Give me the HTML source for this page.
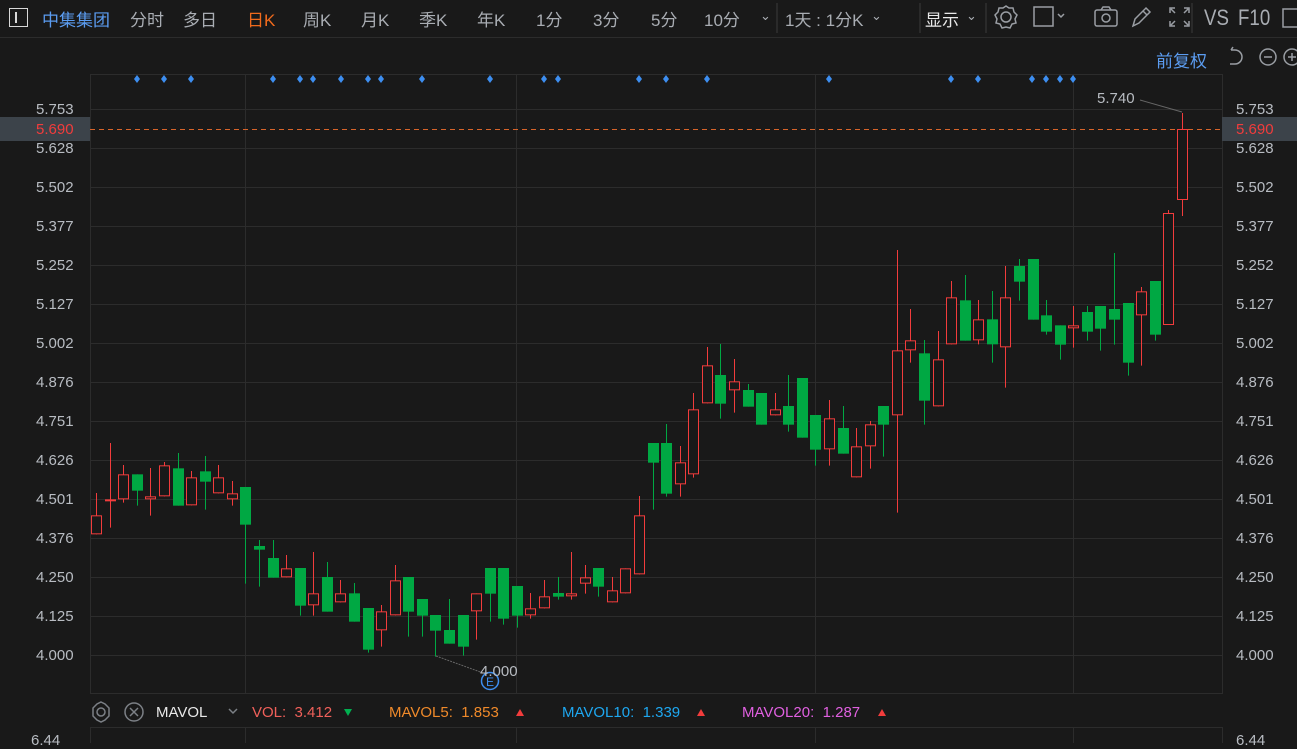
<!DOCTYPE html>
<html><head><meta charset="utf-8">
<style>
*{margin:0;padding:0;box-sizing:border-box}
body{width:1297px;height:743px;background:#191919;overflow:hidden;position:relative;font-family:"Liberation Sans","Noto Sans CJK SC",sans-serif;color:#a9adb3}
.t{position:absolute;white-space:nowrap}
.top span{position:absolute;top:6px;font-size:17px;color:#a9adb3}
.ax{position:absolute;font-size:15px;color:#b8bcc2}
</style></head><body>
<div class="top">
<div class="t" style="left:9px;top:8px;width:19px;height:19px;border:1.5px solid #d8d8d8"></div>
<div class="t" style="left:15px;top:12px;width:2px;height:11px;background:#d8d8d8"></div>
<span style="left:42px;color:#5b9cf0">中集集团</span>
<span style="left:130px">分时</span>
<span style="left:183px">多日</span>
<span style="left:247px;color:#f06a1c">日K</span>
<span style="left:303px">周K</span>
<span style="left:361px">月K</span>
<span style="left:419px">季K</span>
<span style="left:477px">年K</span>
<span style="left:536px">1分</span>
<span style="left:593px">3分</span>
<span style="left:651px">5分</span>
<span style="left:704px">10分</span>
<span style="left:760px;font-size:13px;top:8px">⌄</span>
<span style="left:785px">1天 : 1分K</span>
<span style="left:871px;font-size:13px;top:8px">⌄</span>
<span style="left:925px;color:#e8e8e8">显示</span>
<span style="left:966px;font-size:13px;top:8px">⌄</span>
<span style="left:1204px;font-size:22px;top:5px;transform:scaleX(0.85);transform-origin:left">VS</span>
<span style="left:1238px;font-size:22px;top:5px;transform:scaleX(0.85);transform-origin:left">F10</span>
</div>
<svg style="position:absolute;left:0;top:0" width="1297" height="743">
<g stroke="#3a3a3a"><line x1="777" y1="3" x2="777" y2="33"/><line x1="920" y1="3" x2="920" y2="33"/><line x1="986" y1="3" x2="986" y2="33"/><line x1="1192" y1="3" x2="1192" y2="33"/></g>
<line x1="0" y1="37.5" x2="1297" y2="37.5" stroke="#2c2c2c"/>
<g fill="none" stroke="#9a9ea4" stroke-width="1.5">
<circle cx="1006" cy="17" r="5"/><path d="M1006 6l3 2 4 0 1 4 3 3-2 4 1 4-4 1-2 4-4-1-4 1-2-4-4-1 1-4-2-4 3-3 1-4 4 0z"/>
<rect x="1034" y="7" width="19" height="19"/><path d="M1058 14l3 3 3-3"/>
<rect x="1095" y="10" width="22" height="16" rx="2"/><circle cx="1106" cy="18" r="4"/><path d="M1101 10l2-3h6l2 3"/>
<path d="M1133 26l2-7 11-11 4 4-11 11zM1143 11l4 4"/>
<path d="M1170 13v-5h5M1184 8h5v5M1189 21v5h-5M1175 26h-5v-5M1171 9l4 4M1188 9l-4 4M1188 25l-4-4M1171 25l4-4"/>
<rect x="1283" y="9" width="18" height="18"/>
<path d="M1231 50h4a7 7 0 0 1 0 14h-5M1231 50l2 -3"/>
<circle cx="1268" cy="57" r="8"/><path d="M1264 57h8"/>
<circle cx="1292" cy="57" r="8"/><path d="M1288 57h8M1292 53v8"/>
</g>
<g stroke="#2c2c2c" fill="none">
<rect x="90.5" y="74.5" width="1132" height="619"/>
<line x1="245.5" y1="74" x2="245.5" y2="693"/><line x1="516.5" y1="74" x2="516.5" y2="693"/><line x1="815.5" y1="74" x2="815.5" y2="693"/><line x1="1073.5" y1="74" x2="1073.5" y2="693"/>
<g id="hg"></g>
<line x1="90" y1="727.5" x2="1222" y2="727.5"/><line x1="90.5" y1="727" x2="90.5" y2="743"/><line x1="1222.5" y1="727" x2="1222.5" y2="743"/>
<line x1="245.5" y1="727" x2="245.5" y2="743"/><line x1="516.5" y1="727" x2="516.5" y2="743"/><line x1="815.5" y1="727" x2="815.5" y2="743"/><line x1="1073.5" y1="727" x2="1073.5" y2="743"/>
</g>
<rect x="0" y="117" width="90" height="24" fill="#3c434a"/><rect x="1222" y="117" width="75" height="24" fill="#3c434a"/>
<line x1="90" y1="129.5" x2="1222" y2="129.5" stroke="#d8642a" stroke-dasharray="5,4"/>
<g id="dm" fill="#3d8ef0"></g>
<g id="cd"></g>
<line x1="1140" y1="100" x2="1182" y2="112" stroke="#666"/>
<line x1="436" y1="656" x2="486" y2="674" stroke="#666" stroke-dasharray="2,1"/>
<circle cx="490" cy="681" r="8.5" fill="#191919" stroke="#3d8ef0" stroke-width="1.5"/>
<text x="490" y="686" font-size="12" fill="#3d8ef0" text-anchor="middle" font-family="Liberation Sans">E</text>
<g fill="none" stroke="#7c8086" stroke-width="1.5"><circle cx="101" cy="712" r="4"/><path d="M101 702l4 2 4 4v8l-4 4-4 2-4-2-4-4v-8l4-4z"/><circle cx="134" cy="712" r="9"/><path d="M130 708l8 8M138 708l-8 8"/><path d="M229 709l4 4 4-4"/></g>
<g fill="#f23c3c"><path d="M516 716l4-7 4 7z"/><path d="M697 716l4-7 4 7z"/><path d="M878 716l4-7 4 7z"/></g>
<path d="M344 709h8l-4 7z" fill="#00b050"/>
</svg>
<div class="t" style="left:1156px;top:47px;font-size:17px;color:#5b9cf0">前复权</div>
<div id="axl"></div>
<div class="t" style="left:1097px;top:90px;font-size:15px;color:#b8bcc2">5.740</div>
<div class="t" style="left:480px;top:663px;font-size:15px;color:#b8bcc2">4.000</div>
<div class="t" style="left:156px;top:704px;font-size:15px;color:#e8e8e8">MAVOL</div>
<div class="t" style="left:252px;top:704px;font-size:15px;color:#f0605a">VOL:&nbsp; 3.412</div>
<div class="t" style="left:389px;top:704px;font-size:15px;color:#f08a2a">MAVOL5:&nbsp; 1.853</div>
<div class="t" style="left:562px;top:704px;font-size:15px;color:#1ea7f0">MAVOL10:&nbsp; 1.339</div>
<div class="t" style="left:742px;top:704px;font-size:15px;color:#e060e0">MAVOL20:&nbsp; 1.287</div>
<div class="t" style="left:31px;top:732px;font-size:15px;color:#b8bcc2">6.44</div>
<div class="t" style="left:1236px;top:732px;font-size:15px;color:#b8bcc2">6.44</div>
<script>
var NS="http://www.w3.org/2000/svg";
function el(p,t,a){var e=document.createElementNS(NS,t);for(var k in a)e.setAttribute(k,a[k]);p.appendChild(e);return e;}
var labs=["5.753","5.628","5.502","5.377","5.252","5.127","5.002","4.876","4.751","4.626","4.501","4.376","4.250","4.125","4.000"];
var hg=document.getElementById("hg"),ax=document.getElementById("axl"),h="";
labs.forEach(function(l,i){var y=109+i*39;el(hg,"line",{x1:90,x2:1222,y1:y+.5,y2:y+.5});
h+='<div class="ax" style="left:36px;top:'+(y-8)+'px">'+l+'</div><div class="ax" style="left:1236px;top:'+(y-8)+'px">'+l+'</div>';});
h+='<div class="ax" style="left:36px;top:121px;color:#f23c3c">5.690</div><div class="ax" style="left:1236px;top:121px;color:#f23c3c">5.690</div>';
ax.innerHTML=h;
var dm=document.getElementById("dm");
[137,164,191,273,300,313,341,368,381,422,490,544,558,639,666,707,829,951,978,1032,1046,1060,1073].forEach(function(x){el(dm,"path",{d:"M"+x+" 75l3 4-3 4-3-4z"});});
var A=[["r",189,256,313,313],["r",39,208,208,293],["r",105,133,208,218],["g",133,133,182,227],["r",114,199,208,257],["r",96,106,199,199],["g",69,115,227,227],["r",123,142,226,226],["g",78,124,155,239],["r",105,142,190,190],["r",153,190,208,227],["g",171,171,284,461],["g",330,348,359,470],["g",330,384,443,443],["r",375,415,442,442],["g",414,414,527,557],["r",366,490,526,557],["g",396,441,545,545],["r",450,490,517,517],["g",459,490,575,575],["g",534,534,659,668],["r",525,544,601,650],["r",405,451,556,556],["g",441,441,545,620],["g",507,507,557,620],["g",555,555,602,680],["g",507,600,641,641],["g",555,555,650,677],["r",490,490,544,629],["g",414,414,491,575],["g",414,414,566,584],["g",468,468,557,593],["r",489,535,556,566],["r",450,499,535,535],["g",441,489,500,509],["r",366,490,499,509],["r",405,442,461,491],["g",414,414,470,500],["r",441,481,517,517],["r",415,415,490,490],["r",198,256,433,433]];
var B=[["g",609,609,668,809],["g",552,609,761,770],["r",618,667,733,770],["r",459,508,703,713],["r",321,376,490,490],["g",312,405,491,536],["r",357,424,451,518],["g",432,450,500,500],["g",459,459,554,554],["r",459,508,526,526],["g",405,498,554,575],["g",414,414,593,593],["g",525,525,629,677],["r",480,535,628,677],["g",498,564,641,641],["r",564,619,712,712],["r",543,553,619,686],["g",498,498,554,650],["r",30,331,526,818],["r",207,301,331,368],["g",300,340,482,554],["r",273,358,499,499],["r",123,172,313,313],["g",105,181,302,302],["r",180,238,301,313],["g",153,238,313,368],["r",78,172,322,443],["g",57,78,125,182],["g",57,57,239,239],["g",180,226,275,284],["g",256,256,314,359],["r",198,256,265,323],["g",198,216,275,302],["g",198,198,266,332],["g",39,207,239,314],["g",189,189,368,407],["r",141,154,226,377],["g",123,123,284,302]];
var C=[];A.forEach(function(c){C.push([c[0],430+c[1]/3,430+c[2]/3,430+c[3]/3,430+c[4]/3]);});
B.forEach(function(c){C.push([c[0],240+c[1]/3,240+c[2]/3,240+c[3]/3,240+c[4]/3]);});
C.push(["r",210,213,325,325]);C.push(["r",113,129,200,216]);
var cd=document.getElementById("cd");
C.forEach(function(c,i){var x=Math.round(96.2+i*13.57),col=c[0]=="r"?"#f23c3c":"#00a843";
el(cd,"line",{x1:x+.5,x2:x+.5,y1:c[1],y2:c[4],stroke:col});
var hh=Math.max(c[3]-c[2],1);
if(c[0]=="r")el(cd,"rect",{x:x-4.5,y:c[2]+.5,width:10,height:Math.max(hh-1,1),fill:"#191919",stroke:col});
else el(cd,"rect",{x:x-5,y:c[2],width:11,height:hh,fill:col});});
</script>
</body></html>
